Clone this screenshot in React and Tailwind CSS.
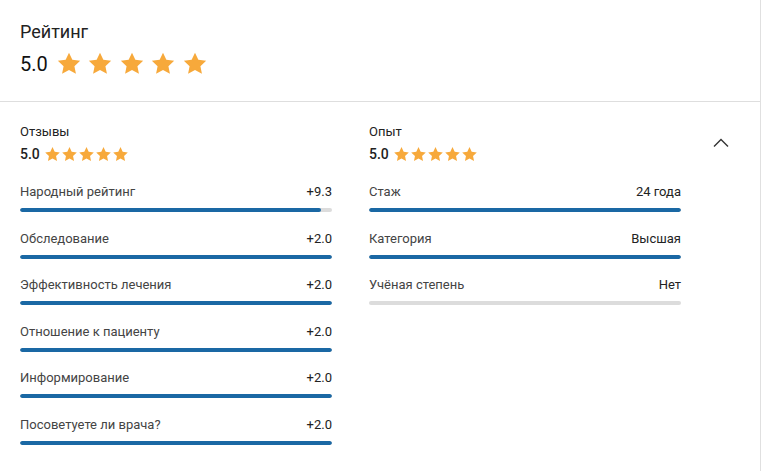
const reviews = [
  { label: "Народный рейтинг", value: "+9.3", fill: 96.5 },
  { label: "Обследование", value: "+2.0", fill: 100 },
  { label: "Эффективность лечения", value: "+2.0", fill: 100 },
  { label: "Отношение к пациенту", value: "+2.0", fill: 100 },
  { label: "Информирование", value: "+2.0", fill: 100 },
  { label: "Посоветуете ли врача?", value: "+2.0", fill: 100 },
];

const experience = [
  { label: "Стаж", value: "24 года", fill: 100 },
  { label: "Категория", value: "Высшая", fill: 100 },
  { label: "Учёная степень", value: "Нет", fill: 0 },
];

function Star({ size }) {
  return (
    <svg width={size} height={size} viewBox="0 0 24 24">
      <path
        d="M12 1.5l3.1 6.6 7.2.9-5.3 5 1.4 7.1L12 17.6l-6.4 3.5L7 14l-5.3-5 7.2-.9z"
        fill="#f7a93b"
      />
    </svg>
  );
}

function Stars({ size, gap }) {
  return (
    <div className={`flex ${gap}`}>
      {[0, 1, 2, 3, 4].map((i) => (
        <Star key={i} size={size} />
      ))}
    </div>
  );
}

function Row({ label, value, fill }) {
  return (
    <div className="mb-[18.6px]">
      <div className="flex justify-between text-[13px] leading-4">
        <span className="text-[#444]">{label}</span>
        <span className="text-[#222]">{value}</span>
      </div>
      <div className="mt-[8px] h-[4px] rounded-full bg-[#dcdcdc] overflow-hidden">
        <div className="h-full rounded-full bg-[#1a68a4]" style={{ width: `${fill}%` }} />
      </div>
    </div>
  );
}

function Column({ title, rows }) {
  return (
    <div className="w-[312px]">
      <div className="text-[13px] leading-4 text-[#222]">{title}</div>
      <div className="mt-[6px] flex items-center gap-[3px] h-4">
        <span className="text-[14px] font-medium text-[#222] mr-[1px]">5.0</span>
        <Stars size={17} gap="gap-0" />
      </div>
      <div className="mt-[22px]">
        {rows.map((r) => (
          <Row key={r.label} {...r} />
        ))}
      </div>
    </div>
  );
}

export default function App() {
  return (
    <div
      className="w-[761px] h-[471px] bg-white border-r border-[#e0e0e0]"
      style={{ fontFamily: "Roboto, 'Liberation Sans', sans-serif" }}
    >
      <div className="px-[20px] pt-[20px] pb-[24px] border-b border-[#dedede]">
        <div className="text-[18px] leading-6 text-[#222]">Рейтинг</div>
        <div className="mt-[7px] flex items-center h-[26px] gap-[8px]">
          <span className="text-[20px] text-[#111]">5.0</span>
          <Stars size={26} gap="gap-[5.5px]" />
        </div>
      </div>
      <div className="flex px-[20px] pt-[22px]">
        <Column title="Отзывы" rows={reviews} />
        <div className="ml-[37px]">
          <Column title="Опыт" rows={experience} />
        </div>
        <div className="ml-[32px] pt-[14px]">
          <svg width="16" height="9" viewBox="0 0 16 9">
            <path d="M1 8.5L8 1.5l7 7" fill="none" stroke="#333" strokeWidth="1.4" />
          </svg>
        </div>
      </div>
    </div>
  );
}
